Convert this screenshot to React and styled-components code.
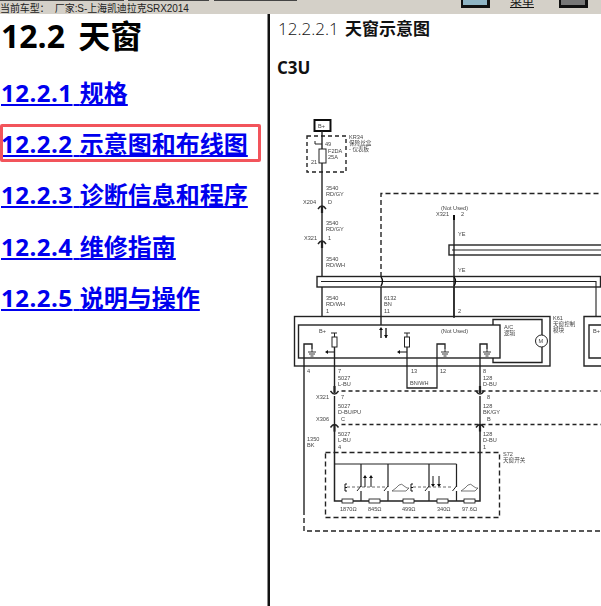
import React from "react";
import styled, { createGlobalStyle } from "styled-components";

const GlobalStyle = createGlobalStyle`
  html, body {
    margin: 0;
    padding: 0;
    background: #fff;
    overflow: hidden;
  }
`;

const Page = styled.div`
  width: 601px;
  height: 606px;
  display: flex;
  flex-direction: column;
  overflow: hidden;
  font-family: "Open Sans", "Noto Sans CJK SC", sans-serif;
`;

const TopBar = styled.div`
  height: 14px;
  flex: none;
  background:
    linear-gradient(to right, #444 0 124px, transparent 124px 128px, #444 128px 209px, transparent 209px 214px, #444 214px 297px, transparent 297px) top / 100% 1px no-repeat,
    #d4d0c8;
  display: flex;
  align-items: flex-end;
  justify-content: space-between;
  overflow: hidden;
`;

const CarInfo = styled.div`
  font: 10px/11px "Liberation Sans", "Noto Sans CJK SC", sans-serif;
  color: #222;
  white-space: pre;
  letter-spacing: -0.1px;
`;

const TopTools = styled.div`
  height: 14px;
  display: flex;
  align-items: flex-start;
  gap: 20px;
  margin-right: 13px;
`;

const ToolIcon = styled.div`
  width: 29px;
  height: 8px;
  box-sizing: border-box;
  background: ${(props) => props.$fill};
  border: 3px solid #111;
  border-top: 0;
  border-left-width: 2px;
`;

const ToolLink = styled.a`
  margin: -4px 5px 0 0;
  font: 12px/12px "Liberation Sans", "Noto Sans CJK SC", sans-serif;
  color: #111;
  text-decoration: underline;
`;

const Frames = styled.div`
  flex: 1;
  display: flex;
  min-height: 0;
`;

const LeftFrame = styled.div`
  width: 267px;
  flex: none;
`;

const Splitter = styled.div`
  width: 3px;
  flex: none;
  box-sizing: border-box;
  background: #111;
  border-left: 1px solid #888;
`;

const RightFrame = styled.div`
  flex: 1;
  min-width: 0;
  overflow: hidden;
`;

const Title = styled.h1`
  margin: 0 0 0 1px;
  font-size: 32px;
  line-height: 44px;
  font-weight: 700;
  color: #000;
  word-spacing: 5px;
`;

const NavList = styled.div`
  display: flex;
  flex-direction: column;
  margin-top: 17px;
`;

const NavItem = styled.div`
  height: 51.2px;
  padding-left: 1px;
  position: relative;
`;

const NavLink = styled.a`
  font-size: 24px;
  line-height: 36px;
  font-weight: 700;
  color: #0000ee;
  text-decoration: underline;
  white-space: nowrap;
`;

const NavNumber = styled.span`
  letter-spacing: 0.5px;
  margin-right: 1px;
`;

const Highlight = styled.div`
  position: absolute;
  left: 0;
  top: -2px;
  width: 261px;
  height: 38px;
  box-sizing: border-box;
  border: 3px solid #f2545b;
  border-radius: 2px;
`;

const SectionHead = styled.div`
  margin: 3px 0 0 8px;
  font-size: 17px;
  line-height: 24px;
  color: #111;
  white-space: nowrap;
  word-spacing: 2px;
`;

const Light = styled.span`
  font-weight: 300;
`;

const Strong = styled.span`
  font-weight: 700;
`;

const Variant = styled.div`
  margin: 15px 0 0 7px;
  font-size: 17px;
  line-height: 24px;
  font-weight: 700;
  color: #111;
`;

const DiagramSvg = styled.svg`
  display: block;
  margin-top: 20px;
`;

const L = styled.text`
  font-family: "Liberation Sans", "Noto Sans CJK SC", sans-serif;
  font-size: 5.6px;
  fill: #444;
`;

const Ground = ({ x, y }) => (
  <path
    d={`M${x} ${y}v3M${x - 4} ${y + 3}h8M${x - 3} ${y + 5}h6M${x - 1.5} ${y + 7}h3`}
    stroke="#222"
    strokeWidth="0.9"
    fill="none"
  />
);

// cap: arc opens down with the thick stem below, cup: arc opens up with the stem above
const Connector = ({ x, y, dash, cup }) => (
  <g stroke="#222" fill="none">
    {cup ? (
      <>
        <path d={`M${x - 4} ${y}q4 6 8 0`} strokeWidth="1.4" />
        <path d={`M${x} ${y - 5}v7`} strokeWidth="2.2" />
      </>
    ) : (
      <>
        <path d={`M${x - 4} ${y + 3}q4 -6 8 0`} strokeWidth="1.4" />
        <path d={`M${x} ${y}v7`} strokeWidth="2.2" />
      </>
    )}
    {dash && <path d={`M${x + 7} ${y}H${dash}`} strokeWidth="1.3" strokeDasharray="4 3" />}
  </g>
);

const Resistor = ({ x, y }) => <rect x={x} y={y} width="11" height="4" fill="#fff" stroke="#222" strokeWidth="0.9" />;

const Cloud = ({ x, y }) => (
  <path d={`M${x} ${y}l4 -3l3 -3q3 -2 5 1l3 2h2l-3 3z`} fill="#fff" stroke="#555" strokeWidth="0.8" />
);

// viewBox keeps the page coordinates, so the numbers can be read off the screenshot
const WiringDiagram = () => (
  <DiagramSvg width="331" height="506" viewBox="270 100 331 506">
    <defs>
      <filter id="soft">
        <feGaussianBlur stdDeviation="0.3" />
      </filter>
    </defs>
    <g filter="url(#soft)" stroke="none">
      <rect x="314.5" y="120" width="16" height="11" fill="#fff" stroke="#111" strokeWidth="2" />
      <L x="318" y="128">B+</L>

      <rect x="307" y="136" width="39" height="36" fill="none" stroke="#222" strokeWidth="1.4" strokeDasharray="4 3" />
      <path d="M322 131V317" stroke="#222" strokeWidth="1.4" />
      <path d="M315 141v3h7" stroke="#222" fill="none" />
      <rect x="319" y="149" width="7" height="14" fill="#fff" stroke="#222" />
      <L x="325" y="146">49</L>
      <L x="311" y="164">21</L>
      <L x="328" y="153">F2DA</L>
      <L x="328" y="159">25A</L>
      <L x="349" y="139">KR34</L>
      <L x="349" y="145">保险丝盒</L>
      <L x="349" y="151">- 仪表板</L>

      <L x="326" y="189.5">3540</L>
      <L x="326" y="195.5">RD/GY</L>
      <L x="303" y="204">X204</L>
      <L x="328" y="204">D</L>
      <Connector x={322} y={206} />
      <L x="326" y="224.5">3540</L>
      <L x="326" y="230.5">RD/GY</L>
      <L x="304" y="240">X321</L>
      <L x="328" y="240">1</L>
      <Connector x={322} y={241} />
      <L x="326" y="261">3540</L>
      <L x="326" y="267">RD/WH</L>

      <path d="M381 277V193.5H601" fill="none" stroke="#222" strokeWidth="1.4" strokeDasharray="5 3" />
      <L x="441" y="210">(Not Used)</L>
      <L x="436" y="216">X321</L>
      <L x="461" y="216">2</L>
      <path d="M454 216V318" stroke="#222" strokeWidth="1.4" />
      <path d="M454 215v5" stroke="#111" strokeWidth="2" />
      <L x="458" y="236">YE</L>
      <rect x="449" y="245" width="160" height="10" fill="none" stroke="#222" strokeWidth="1.4" />
      <path d="M452 250H601" stroke="#222" strokeWidth="1.1" />
      <L x="458" y="272">YE</L>
      <rect x="317" y="276.5" width="283.5" height="10.5" fill="#fff" stroke="#222" strokeWidth="1.4" />
      <path d="M321 281.5H596V317" fill="none" stroke="#222" strokeWidth="1.1" />
      <path d="M454 276V317" stroke="#222" strokeWidth="1.4" />
      <path d="M381 277q3 4 0 9M454 277q3 4 0 9" fill="none" stroke="#111" strokeWidth="1.4" />

      <L x="326" y="300">3540</L>
      <L x="326" y="306">RD/WH</L>
      <L x="326" y="313">1</L>
      <L x="384" y="300">6132</L>
      <L x="384" y="306">BN</L>
      <L x="384" y="313">11</L>
      <L x="458" y="313">2</L>
      <path d="M381 287V326" stroke="#222" strokeWidth="1.4" />

      <rect x="294.5" y="316.5" width="255.5" height="49.5" fill="none" stroke="#222" strokeWidth="1.4" />
      <path d="M493 325V319.5H542V362.5H493V358" fill="none" stroke="#222" strokeWidth="1.4" />
      <rect x="298.5" y="325" width="201.5" height="33" fill="#fff" stroke="#222" strokeWidth="1.4" />
      <circle cx="541.5" cy="341" r="6" fill="#fff" stroke="#222" />
      <L x="538.5" y="343">M</L>
      <L x="504" y="329">A/C</L>
      <L x="504" y="335">逻辑</L>
      <L x="553" y="320">K61</L>
      <L x="553" y="326">天窗控制</L>
      <L x="553" y="332">模块</L>
      <path d="M601 316.5H584V366H601M601 325H589V358H601" fill="none" stroke="#222" strokeWidth="1.4" />
      <L x="593" y="333">B+</L>

      <L x="319" y="333">B+</L>
      <L x="441" y="333">(Not Used)</L>
      <path d="M381 329v9M386 328v10" stroke="#111" strokeWidth="1.3" />
      <path d="M379 330l2 -3l2 3zM384 335l2 3l2 -3z" fill="#111" />

      <path d="M331 333h6M334.5 333v4M404 333h6M407 333v4" stroke="#222" />
      <path d="M334.5 347V392" stroke="#222" strokeWidth="1.4" />
      <path d="M327 352h7M399 352h8" stroke="#111" strokeWidth="1.2" />
      <path d="M325 352l3 -2v4zM397 352l3 -2v4z" fill="#111" />
      <path d="M407 347V388H437V344H445V349" fill="none" stroke="#222" strokeWidth="1.3" />
      <rect x="404.5" y="337" width="5" height="10" fill="#fff" stroke="#222" />
      <rect x="332" y="337" width="5" height="10" fill="#fff" stroke="#222" />

      <path d="M304 510V344H312V349" fill="none" stroke="#222" strokeWidth="1.4" />
      <Ground x={312} y={349} />
      <Ground x={445} y={349} />
      <path d="M480 391V344H487V349" fill="none" stroke="#222" strokeWidth="1.4" />
      <Ground x={487} y={349} />

      <L x="307" y="373">4</L>
      <L x="338" y="373">7</L>
      <L x="338" y="380">5027</L>
      <L x="338" y="386">L-BU</L>
      <L x="411" y="373">13</L>
      <L x="440" y="373">12</L>
      <L x="483" y="373">8</L>
      <L x="483" y="380">128</L>
      <L x="483" y="386">D-BU</L>
      <L x="410" y="385">BN/WH</L>

      <Connector x={334.5} y={391} dash={601} cup />
      <Connector x={480} y={391} cup />
      <L x="316" y="399">X321</L>
      <L x="341" y="399">7</L>
      <L x="338" y="408">5027</L>
      <L x="338" y="414">D-BU/PU</L>
      <L x="487" y="399">8</L>
      <L x="483" y="408">128</L>
      <L x="483" y="414">BK/GY</L>
      <path d="M334.5 396V424M480 396V424" stroke="#222" strokeWidth="1.4" />
      <Connector x={334.5} y={424.5} dash={601} />
      <Connector x={480} y={424.5} />
      <L x="316" y="421">X306</L>
      <L x="341" y="421">C</L>
      <L x="487" y="421">B</L>
      <L x="338" y="436">5027</L>
      <L x="338" y="442">L-BU</L>
      <L x="338" y="449">4</L>
      <L x="483" y="436">128</L>
      <L x="483" y="442">D-BU</L>
      <L x="483" y="449">1</L>
      <L x="307" y="441">1350</L>
      <L x="307" y="447">BK</L>

      <rect x="325.5" y="452.5" width="174" height="65" fill="none" stroke="#222" strokeWidth="1.4" strokeDasharray="5 3" />
      <L x="503" y="456">S72</L>
      <L x="503" y="462">天窗开关</L>
      <path d="M334.5 431V501H480V431" fill="none" stroke="#222" strokeWidth="1.5" />
      <path d="M334.5 464H456.5M361 464V487M388 464V487M429 464V487M456.5 464V487" fill="none" stroke="#222" strokeWidth="1.2" />
      <path d="M361 491V501M388 491V501M429 491V501M456.5 491V501" fill="none" stroke="#222" strokeWidth="1.2" />
      <path d="M361 486l-4 5M388 486l-4 5M429 486l-4 5M456.5 486l-4 5" stroke="#222" fill="none" />
      <path d="M347 487H385M413 487H453" stroke="#444" strokeWidth="0.8" strokeDasharray="3 2" fill="none" />
      <path d="M347 484h-2v7h2M413 484h-2v7h2M345 487.5h2M411 487.5h2" stroke="#111" fill="none" />
      <path d="M365 487v-10M371 487v-10M433 476v10M439 476v10" stroke="#111" />
      <path d="M363 478l2 -3l2 3zM369 478l2 -3l2 3zM431 484l2 3l2 -3zM437 484l2 3l2 -3z" fill="#111" />
      <Cloud x={392} y={491} />
      <Cloud x={461} y={491} />
      <Resistor x={342} y={499} />
      <Resistor x={369} y={499} />
      <Resistor x={403} y={499} />
      <Resistor x={437} y={499} />
      <Resistor x={464} y={499} />
      <L x="340" y="511">1870Ω</L>
      <L x="368" y="511">845Ω</L>
      <L x="402" y="511">499Ω</L>
      <L x="437" y="511">340Ω</L>
      <L x="462" y="511">97.6Ω</L>

      <path d="M304 510V531H601" fill="none" stroke="#222" strokeWidth="1.4" strokeDasharray="5 3" />
    </g>
  </DiagramSvg>
);

const navItems = [
  ["12.2.1", "规格"],
  ["12.2.2", "示意图和布线图"],
  ["12.2.3", "诊断信息和程序"],
  ["12.2.4", "维修指南"],
  ["12.2.5", "说明与操作"],
];

const App = () => (
  <Page>
    <GlobalStyle />
    <TopBar>
      <CarInfo>{"当前车型：  厂家:S-上海凯迪拉克SRX2014"}</CarInfo>
      <TopTools>
        <ToolIcon $fill="#8fb4c4" />
        <ToolLink>菜单</ToolLink>
        <ToolIcon $fill="#777" />
      </TopTools>
    </TopBar>
    <Frames>
      <LeftFrame>
        <Title>12.2 天窗</Title>
        <NavList>
          {navItems.map(([num, label], i) => (
            <NavItem key={num}>
              {i === 1 && <Highlight />}
              <NavLink><NavNumber>{num}</NavNumber> {label}</NavLink>
            </NavItem>
          ))}
        </NavList>
      </LeftFrame>
      <Splitter />
      <RightFrame>
        <SectionHead><Light>12.2.2.1 </Light><Strong>天窗示意图</Strong></SectionHead>
        <Variant>C3U</Variant>
        <WiringDiagram />
      </RightFrame>
    </Frames>
  </Page>
);

export default App;
